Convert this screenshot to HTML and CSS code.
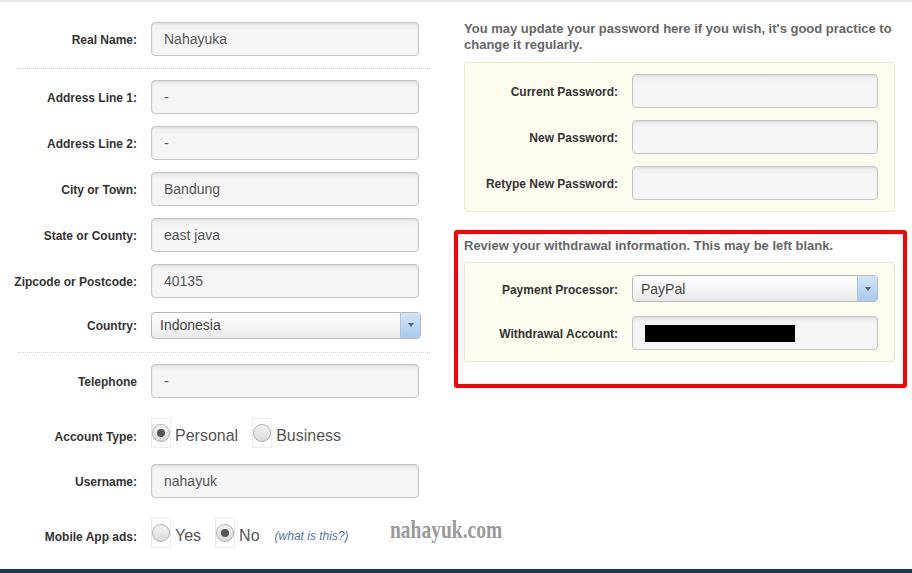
FILE: index.html
```html
<!DOCTYPE html>
<html>
<head>
<meta charset="utf-8">
<link rel="stylesheet" href="styles.css">
</head>
<body>
<div class="topbar"></div>
<div class="main">
  <div class="left">
    <div class="row"><label class="label">Real Name:</label><div class="input">Nahayuka</div></div>
    <div class="sep"></div>
    <div class="row"><label class="label">Address Line 1:</label><div class="input">-</div></div>
    <div class="row"><label class="label">Address Line 2:</label><div class="input">-</div></div>
    <div class="row"><label class="label">City or Town:</label><div class="input">Bandung</div></div>
    <div class="row"><label class="label">State or County:</label><div class="input">east java</div></div>
    <div class="row"><label class="label">Zipcode or Postcode:</label><div class="input">40135</div></div>
    <div class="row row-select"><label class="label">Country:</label><div class="select select-wide"><span class="select-text">Indonesia</span><span class="select-btn"><span class="tri"></span></span></div></div>
    <div class="sep"></div>
    <div class="row"><label class="label">Telephone</label><div class="input">-</div></div>
    <div class="row radio-row"><label class="label">Account Type:</label>
      <div class="radios">
        <span class="radio-cell"><span class="radio checked"></span></span><span class="radio-text">Personal</span>
        <span class="radio-cell"><span class="radio"></span></span><span class="radio-text">Business</span>
      </div>
    </div>
    <div class="row"><label class="label">Username:</label><div class="input">nahayuk</div></div>
    <div class="row radio-row"><label class="label">Mobile App ads:</label>
      <div class="radios">
        <span class="radio-cell"><span class="radio"></span></span><span class="radio-text">Yes</span>
        <span class="radio-cell"><span class="radio checked"></span></span><span class="radio-text">No</span>
        <a class="what">(what is this?)</a>
      </div>
    </div>
  </div>
  <div class="right">
    <p class="intro">You may update your password here if you wish, it's good practice to change it regularly.</p>
    <div class="panel">
      <div class="prow"><label class="plabel">Current Password:</label><div class="input pinput"></div></div>
      <div class="prow"><label class="plabel">New Password:</label><div class="input pinput"></div></div>
      <div class="prow"><label class="plabel">Retype New Password:</label><div class="input pinput"></div></div>
    </div>
    <p class="review">Review your withdrawal information. This may be left blank.</p>
    <div class="panel panel2">
      <div class="prow prow-select"><label class="plabel">Payment Processor:</label><div class="select pinput"><span class="select-text">PayPal</span><span class="select-btn"><span class="tri"></span></span></div></div>
      <div class="prow"><label class="plabel">Withdrawal Account:</label><div class="input pinput"><span class="redact"></span></div></div>
    </div>
  </div>
</div>
<div class="footer"></div>
<div class="annot"></div>
<div class="watermark"><span>nahayuk.com</span></div>
</body>
</html>
```

FILE: styles.css
```css
html, body {
  margin: 0;
  padding: 0;
  background: #ffffff;
  overflow: hidden;
}
body {
  font-family: "Liberation Sans", Arial, sans-serif;
  color: #333;
  position: relative;
  width: 912px;
  height: 573px;
}
.topbar {
  height: 2px;
  background: #e7e9ee;
}
.main {
  display: flex;
  height: 567px;
  box-sizing: border-box;
}
.left {
  width: 440px;
  flex: none;
  padding-top: 20px;
}
.row {
  display: flex;
  align-items: center;
  gap: 14px;
  height: 34px;
  margin-bottom: 12px;
}
.row-select {
  height: 30px;
}
.radio-row {
  height: 42px;
  box-sizing: border-box;
  padding-top: 4px;
}
.label {
  width: 137px;
  flex: none;
  text-align: right;
  font-weight: bold;
  font-size: 12px;
  color: #333;
  padding-top: 2px;
}
.radio-row .label {
  padding-top: 7px;
}
.sep {
  border-top: 1px dotted #cfcfcf;
  margin: 0 10px 11px 18px;
}
.input {
  box-sizing: border-box;
  width: 268px;
  height: 34px;
  border: 1px solid #c6c6c6;
  border-radius: 4px;
  background: linear-gradient(#ebebeb, #f5f5f5 7px, #f5f5f5);
  box-shadow: inset 0 1px 2px rgba(0,0,0,0.08);
  font-size: 14px;
  color: #555;
  padding-left: 12px;
  display: flex;
  align-items: center;
}
.select {
  box-sizing: border-box;
  height: 27px;
  border: 1px solid #b9b9b9;
  border-radius: 4px;
  background: linear-gradient(#ffffff, #f3f3f3 60%, #e9e9e9);
  display: flex;
  align-items: stretch;
  font-size: 14px;
  color: #444;
  overflow: hidden;
}
.select-wide {
  width: 270px;
}
.select-text {
  flex: 1;
  display: flex;
  align-items: center;
  padding-left: 8px;
}
.select-btn {
  width: 19px;
  flex: none;
  border-left: 1px solid #a9c4e2;
  background: linear-gradient(#d2e4f7, #a7cbef);
  display: flex;
  align-items: center;
  justify-content: center;
}
.tri {
  width: 0;
  height: 0;
  border-left: 3px solid transparent;
  border-right: 3px solid transparent;
  border-top: 4px solid #5a6370;
}
.radios {
  display: flex;
  align-items: center;
}
.radio-cell {
  box-sizing: border-box;
  width: 20px;
  height: 30px;
  border: 1px solid #ececec;
  display: flex;
  align-items: center;
  justify-content: center;
  flex: none;
}
.radio {
  box-sizing: border-box;
  width: 18px;
  height: 18px;
  border-radius: 50%;
  border: 1px solid #b0b0b0;
  background: linear-gradient(#f6f6f6, #d9d9d9);
  display: flex;
  align-items: center;
  justify-content: center;
}
.radio.checked::after {
  content: "";
  width: 8px;
  height: 8px;
  border-radius: 50%;
  background: #555;
}
.radio-text {
  font-size: 16px;
  color: #555;
  margin-left: 4px;
  margin-right: 14px;
  padding-top: 5px;
}
.what {
  font-size: 12px;
  font-style: italic;
  color: #4f73a8;
  margin-left: 1px;
  padding-top: 6px;
}
.right {
  width: 431px;
  margin-left: 24px;
  flex: none;
  padding-top: 19px;
}
.intro {
  margin: 0 0 9px;
  font-size: 13px;
  font-weight: bold;
  line-height: 16px;
  color: #666;
}
.review {
  margin: 26px 0 8px;
  font-size: 13px;
  font-weight: bold;
  line-height: 16px;
  color: #666;
}
.panel {
  border: 1px solid #ece7c7;
  border-radius: 4px;
  background: #fefdf0;
  padding: 11px 16px 11px 0;
  display: flex;
  flex-direction: column;
  gap: 12px;
}
.panel2 {
  padding-top: 12px;
  padding-bottom: 11px;
  gap: 14px;
}
.prow {
  display: flex;
  align-items: center;
  gap: 14px;
}
.plabel {
  width: 153px;
  flex: none;
  text-align: right;
  font-weight: bold;
  font-size: 12px;
  color: #333;
  padding-top: 2px;
}
.pinput {
  width: 246px;
}
.redact {
  display: block;
  width: 150px;
  height: 17px;
  background: #000;
  margin-top: 1px;
}
.footer {
  height: 10px;
  background: #1b3a54;
}
.annot {
  position: absolute;
  left: 454px;
  top: 230px;
  width: 453px;
  height: 158px;
  box-sizing: border-box;
  border: 4px solid #ff0000;
  border-radius: 3px;
}
.watermark {
  position: absolute;
  left: 390px;
  top: 517px;
  font-family: "Liberation Serif", serif;
  font-weight: bold;
  font-size: 26px;
  line-height: 1;
  color: #9a9a9a;
}
.watermark span {
  display: inline-block;
  transform: scaleX(0.75);
  transform-origin: left top;
}
```
